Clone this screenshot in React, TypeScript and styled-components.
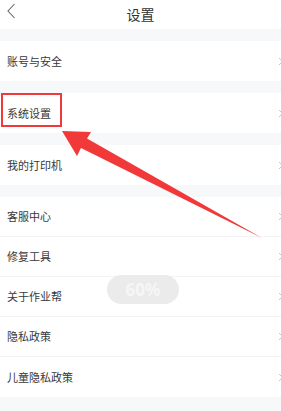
import React from 'react';
import styled, { createGlobalStyle } from 'styled-components';

const GlobalStyle = createGlobalStyle`
  html, body {
    margin: 0;
    padding: 0;
    background: #f7f8fa;
  }
  body {
    font-family: "Noto Sans CJK SC", "Noto Sans", sans-serif;
  }
`;

const groups: string[][] = [
  ['账号与安全'],
  ['系统设置'],
  ['我的打印机'],
  ['客服中心', '修复工具', '关于作业帮', '隐私政策', '儿童隐私政策'],
];

const App = () => {
  return (
    <>
      <GlobalStyle />
      <Page>
        <Header>
          <BackButton>
            <svg width="10" height="16" viewBox="0 0 10 16">
              <path d="M8.5 1 L2 8 L8.5 15" fill="none" stroke="#666" strokeWidth="1.1" />
            </svg>
          </BackButton>
          <Title>设置</Title>
        </Header>
        {groups.map((items, gi) => (
          <Group key={gi}>
            {items.map((label, i) => (
              <Row key={label} $last={i === items.length - 1}>
                <Label>{label}</Label>
                <Chevron width="6" height="9" viewBox="0 0 6 9">
                  <path d="M1 1 L4.5 4.5 L1 8" fill="none" stroke="#c8c8c8" strokeWidth="1" />
                </Chevron>
              </Row>
            ))}
          </Group>
        ))}
        <Highlight />
        <Arrow width="281" height="411" viewBox="0 0 281 411">
          <polygon
            points="62,131 91,132 87,138.5 262,238 81,148 77,156"
            fill="#f2393a"
          />
        </Arrow>
        <Toast>60%</Toast>
      </Page>
    </>
  );
};

const Page = styled.div`
  position: relative;
  width: 281px;
  height: 411px;
  overflow: hidden;
  background: #f7f8fa;
  display: flex;
  flex-direction: column;
`;

const Header = styled.div`
  position: relative;
  height: 29px;
  background: #ffffff;
  display: flex;
  align-items: center;
  justify-content: center;
  flex-shrink: 0;
`;

const BackButton = styled.div`
  position: absolute;
  left: 6px;
  top: 3px;
  width: 12px;
  height: 16px;
  display: flex;
  align-items: center;
`;

const Title = styled.div`
  font-size: 14px;
  color: #333333;
  line-height: 1;
  margin-top: -2px;
`;

const Group = styled.div`
  margin-top: 12px;
  background: #ffffff;
  display: flex;
  flex-direction: column;
`;

const Row = styled.div<{ $last: boolean }>`
  height: 40px;
  box-sizing: border-box;
  padding-left: 7px;
  display: flex;
  align-items: center;
  justify-content: space-between;
  border-bottom: ${(p) => (p.$last ? 'none' : '1px solid #f3f3f3')};
`;

const Label = styled.span`
  font-size: 11px;
  color: #383838;
  line-height: 1;
`;

const Chevron = styled.svg`
  margin-right: -3px;
`;

const Highlight = styled.div`
  position: absolute;
  left: 1px;
  top: 93px;
  width: 61px;
  height: 34px;
  box-sizing: border-box;
  border: 2.5px solid #f0393a;
`;

const Arrow = styled.svg`
  position: absolute;
  left: 0;
  top: 0;
  pointer-events: none;
`;

const Toast = styled.div`
  position: absolute;
  left: 107px;
  top: 275px;
  width: 72px;
  height: 29px;
  border-radius: 15px;
  background: #ebebeb;
  color: #f6f6f6;
  font-family: "Noto Sans", sans-serif;
  font-weight: 700;
  font-size: 17px;
  display: flex;
  align-items: center;
  justify-content: center;
`;

export default App;
